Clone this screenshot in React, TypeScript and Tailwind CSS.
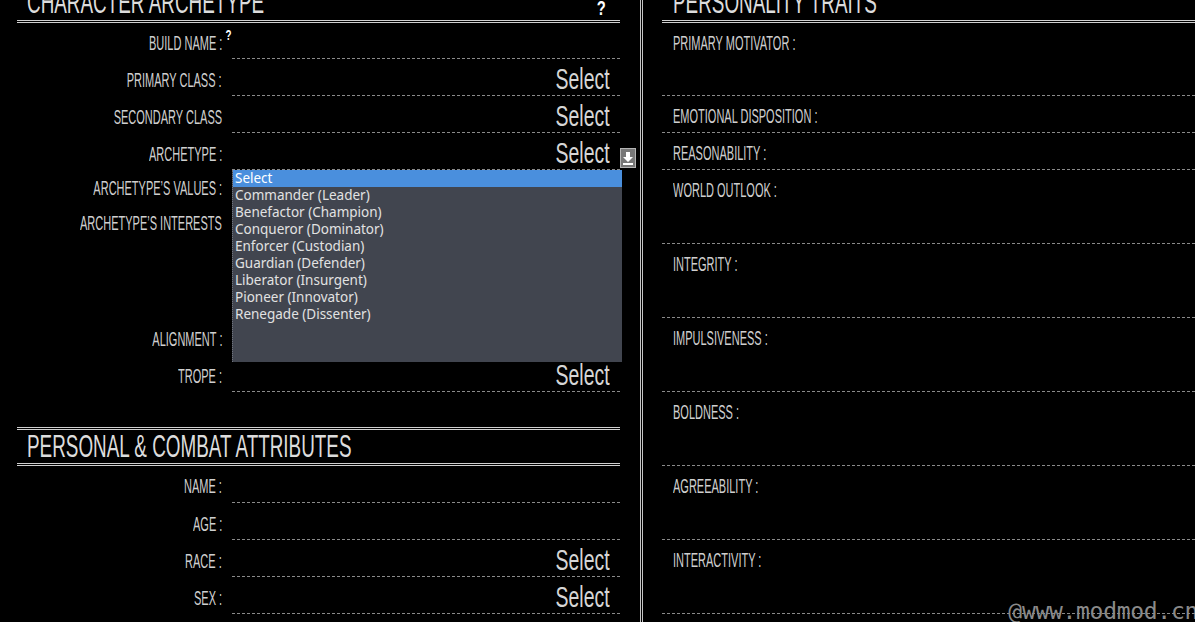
import type { ReactNode } from 'react'

const ARCHETYPES = [
  'Select',
  'Commander (Leader)',
  'Benefactor (Champion)',
  'Conqueror (Dominator)',
  'Enforcer (Custodian)',
  'Guardian (Defender)',
  'Liberator (Insurgent)',
  'Pioneer (Innovator)',
  'Renegade (Dissenter)',
]

/** Narrow caps label, squeezed horizontally to mimic the condensed sheet font */
function Label({ children, left }: { children: ReactNode; left?: boolean }) {
  return (
    <span
      className={`inline-block whitespace-nowrap text-[20px] leading-[20px] text-[#cfcfcf] scale-x-[0.55] ${
        left ? 'origin-left' : 'origin-right'
      }`}
    >
      {children}
    </span>
  )
}

function Title({ children }: { children: ReactNode }) {
  return (
    <span className="inline-block origin-left scale-x-[0.59] whitespace-nowrap text-[32px] leading-[32px] text-[#dcdcdc]">
      {children}
    </span>
  )
}

function SelectValue() {
  return (
    <span className="inline-block origin-right scale-x-[0.67] whitespace-nowrap text-[29px] leading-[29px] text-[#d6d6d6]">
      Select
    </span>
  )
}

type RowProps = {
  label: string
  h: string
  pt?: string
  select?: boolean
  hint?: boolean
  children?: ReactNode
}

function FieldRow({ label, h, pt = 'pt-[10px]', select, hint, children }: RowProps) {
  return (
    <div className={`flex ${h}`}>
      <div className={`relative flex w-[215px] shrink-0 items-start justify-end pr-[10px] ${pt}`}>
        <Label>{label}</Label>
        {hint && (
          <span className="absolute right-0 top-[5px] inline-block origin-right scale-x-[0.7] text-[14px] font-bold leading-none text-white">
            ?
          </span>
        )}
      </div>
      <div className="relative flex flex-1 items-start justify-end border-b border-dashed border-[#8a8a8a] pr-[10px] pt-[6px]">
        {select && <SelectValue />}
        {children}
      </div>
    </div>
  )
}

function TraitRow({ label, h }: { label: string; h: string }) {
  return (
    <div className={`${h} border-b border-dashed border-[#8a8a8a] pl-[11px] pt-[10px]`}>
      <Label left>{label}</Label>
    </div>
  )
}

function SectionHeader({ title, help }: { title: string; help?: boolean }) {
  return (
    <div className="flex h-[23px] items-end border-b-[3px] border-double border-[#cfcfcf]">
      <div className="pl-[10px]">
        <Title>{title}</Title>
      </div>
      {help && (
        <span className="ml-auto mr-[14px] mb-[2px] inline-block origin-right scale-x-[0.7] text-[21px] font-bold leading-[21px] text-white">
          ?
        </span>
      )}
    </div>
  )
}

function ArchetypeList() {
  return (
    <ul className="absolute left-0 top-[37px] z-10 h-[192px] w-[390px] border-l border-dotted border-[#70747e] bg-[#41454f] font-['Noto_Sans','Open_Sans',sans-serif] text-[13.5px] leading-[17px]">
      {ARCHETYPES.map((a, i) => (
        <li
          key={a}
          className={i === 0 ? 'bg-[#4a8fdd] pl-[2px] text-white' : 'pl-[2px] text-[#e2e2e2]'}
        >
          {a}
        </li>
      ))}
    </ul>
  )
}

function DropArrow() {
  return (
    <svg width="16" height="20" viewBox="0 0 16 20" className="absolute left-full top-[15px]">
      <rect x="0.5" y="0.5" width="15" height="19" fill="#777" stroke="#b4b4b4" />
      <path d="M6 4h4v5h3l-5 5-5-5h3z" fill="#fff" />
      <rect x="3" y="15" width="10" height="2" fill="#fff" />
    </svg>
  )
}

export default function App() {
  return (
    <div className="relative h-[622px] w-[1195px] overflow-hidden bg-black font-['Liberation_Sans',Arial,sans-serif]">
      <div className="flex h-full">
        {/* Left column: archetype + personal attributes */}
        <section className="w-[620px] shrink-0 pl-[17px]">
          <SectionHeader title="CHARACTER ARCHETYPE" help />
          <FieldRow label="BUILD NAME :" h="h-[36px]" hint />
          <FieldRow label="PRIMARY CLASS :" h="h-[37px]" pt="pt-[11px]" select />
          <FieldRow label="SECONDARY CLASS" h="h-[37px]" pt="pt-[11px]" select />
          <FieldRow label="ARCHETYPE :" h="h-[37px]" pt="pt-[11px]" select>
            <DropArrow />
            <ArchetypeList />
          </FieldRow>
          <FieldRow label="ARCHETYPE’S VALUES :" h="h-[34px]" pt="pt-[8px]" />
          <FieldRow label="ARCHETYPE’S INTERESTS" h="h-[114px]" pt="pt-[9px]" />
          <FieldRow label="ALIGNMENT :" h="h-[37px]" pt="pt-[11px]" />
          <FieldRow label="TROPE :" h="h-[37px]" pt="pt-[11px]" select />

          <div className="mt-[35px] h-[39px] border-y-[3px] border-double border-[#cfcfcf] pl-[10px]">
            <Title>PERSONAL &amp; COMBAT ATTRIBUTES</Title>
          </div>
          <FieldRow label="NAME :" h="h-[37px]" />
          <FieldRow label="AGE :" h="h-[37px]" pt="pt-[11px]" />
          <FieldRow label="RACE :" h="h-[37px]" pt="pt-[11px]" select />
          <FieldRow label="SEX :" h="h-[37px]" pt="pt-[11px]" select />
        </section>

        <div className="ml-[20px] w-[3px] shrink-0 border-x border-[#c4c4c4]" />

        {/* Right column: personality traits */}
        <section className="flex-1 pl-[19px]">
          <div className="flex h-[23px] items-end border-b-[3px] border-double border-[#cfcfcf]">
            <div className="pl-[11px]">
              <Title>PERSONALITY TRAITS</Title>
            </div>
          </div>
          <TraitRow label="PRIMARY MOTIVATOR :" h="h-[73px]" />
          <TraitRow label="EMOTIONAL DISPOSITION :" h="h-[37px]" />
          <TraitRow label="REASONABILITY :" h="h-[37px]" />
          <TraitRow label="WORLD OUTLOOK :" h="h-[74px]" />
          <TraitRow label="INTEGRITY :" h="h-[74px]" />
          <TraitRow label="IMPULSIVENESS :" h="h-[74px]" />
          <TraitRow label="BOLDNESS :" h="h-[74px]" />
          <TraitRow label="AGREEABILITY :" h="h-[74px]" />
          <TraitRow label="INTERACTIVITY :" h="h-[74px]" />
        </section>
      </div>

      <span className="absolute bottom-[-6px] right-[-3px] font-['DejaVu_Sans_Mono',monospace] text-[23px] tracking-[-0.3px] text-[#8a8a8a]">
        @www.modmod.cn
      </span>
    </div>
  )
}
